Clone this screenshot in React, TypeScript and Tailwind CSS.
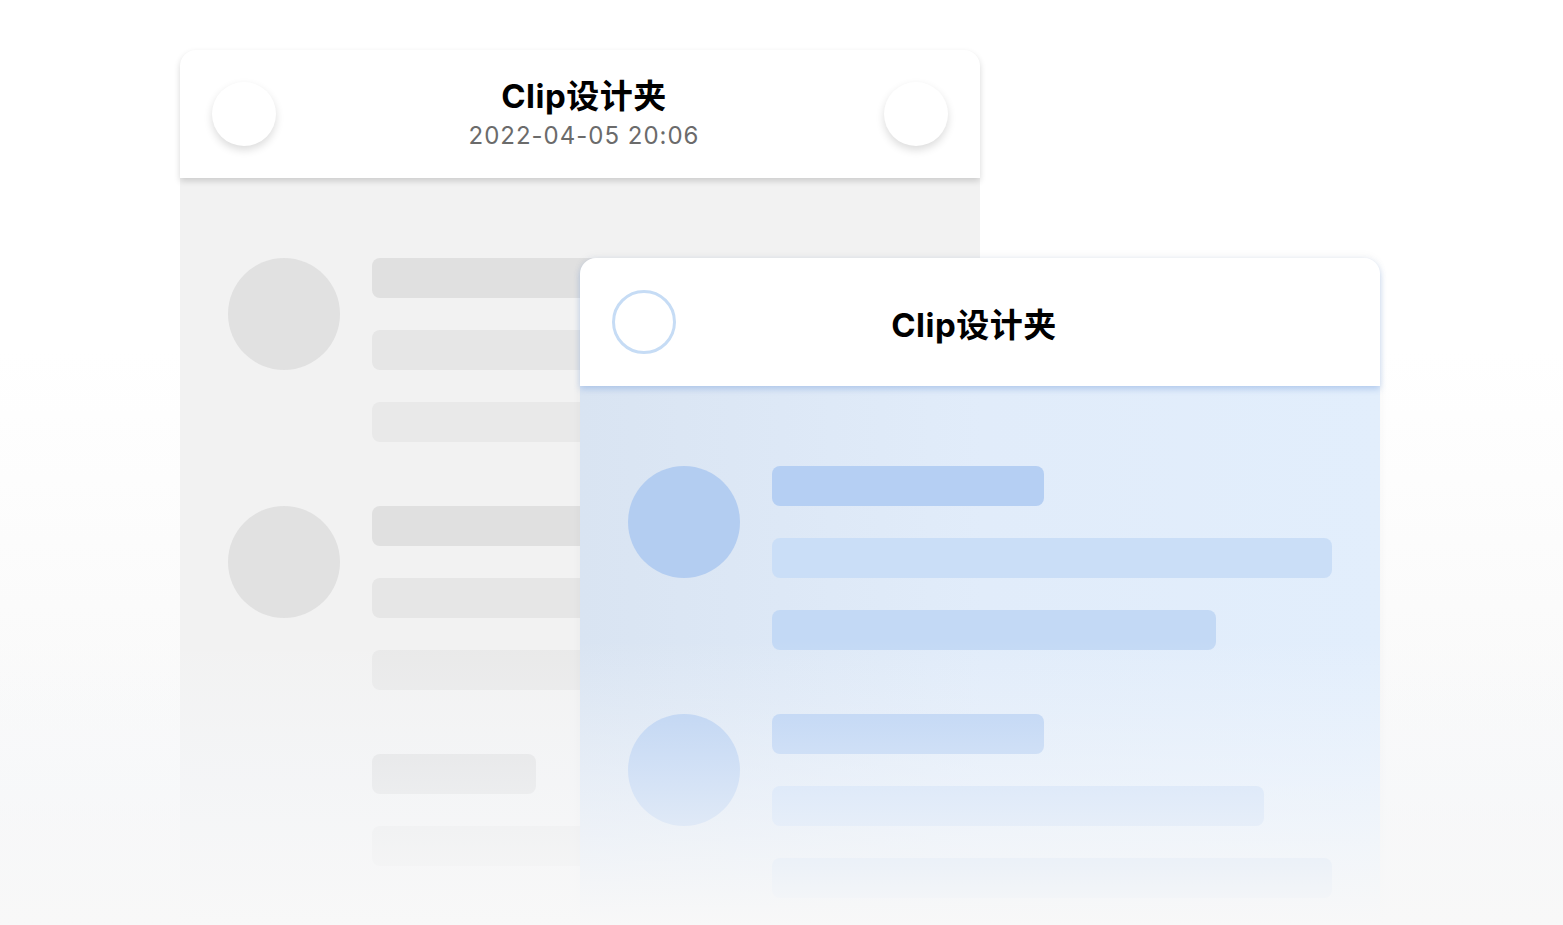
import React from "react"

const font = { fontFamily: '"Inter", "Noto Sans CJK SC", sans-serif' }

type Row = { w: string; c: string }

function Group({ circle, rows }: { circle?: string; rows: Row[] }) {
  return (
    <div className="flex gap-8">
      <div className={`w-28 h-28 shrink-0 rounded-full ${circle ?? ""}`} />
      <div className="flex flex-col gap-8">
        {rows.map((r, i) => (
          <div key={i} className={`h-10 rounded-lg ${r.w} ${r.c}`} />
        ))}
      </div>
    </div>
  )
}

const grey = ["bg-[#e0e0e0]", "bg-[#e6e6e6]", "bg-[#e9e9e9]"]

function BackCard() {
  return (
    <div className="absolute left-[180px] top-[50px] w-[800px] h-[875px] flex flex-col">
      {/* Header */}
      <div className="relative z-10 h-32 bg-white rounded-t-2xl shadow-[0_3px_6px_rgba(0,0,0,0.16)] flex items-center justify-between px-8">
        <div className="w-16 h-16 rounded-full bg-white shadow-[0_4px_8px_rgba(0,0,0,0.14)]" />
        <div className="flex flex-col items-center ml-2">
          <div className="text-[33px] leading-[38px] font-bold tracking-[0.5px] text-black">Clip设计夹</div>
          <div className="mt-1.5 text-[24px] leading-[30px] text-[#6b6b6b] tracking-[1px]">2022-04-05 20:06</div>
        </div>
        <div className="w-16 h-16 rounded-full bg-white shadow-[0_4px_8px_rgba(0,0,0,0.14)]" />
      </div>

      {/* Body */}
      <div className="flex-1 bg-[#f2f2f2] pl-12 pt-20 flex flex-col gap-16">
        <Group circle="bg-[#e1e1e1]" rows={grey.map((c) => ({ w: "w-[560px]", c }))} />
        <Group circle="bg-[#e1e1e1]" rows={grey.map((c) => ({ w: "w-[560px]", c }))} />
        <Group rows={[{ w: "w-[164px]", c: grey[0] }, { w: "w-[560px]", c: grey[1] }]} />
      </div>
    </div>
  )
}

function FrontCard() {
  return (
    <div className="absolute left-[580px] top-[258px] w-[800px] h-[667px] flex flex-col rounded-t-2xl shadow-[0_-2px_10px_rgba(0,0,0,0.04)]">
      {/* Header */}
      <div className="relative z-10 h-32 bg-white rounded-t-2xl shadow-[0_3px_6px_rgba(120,160,220,0.45)] flex items-center px-8">
        <div className="w-16 h-16 shrink-0 rounded-full border-[3px] border-[#c6dcf5] bg-white" />
        <div className="flex-1 text-center pt-1.5 pr-[76px] text-[33px] leading-[38px] font-bold tracking-[0.5px] text-black">Clip设计夹</div>
      </div>

      {/* Body */}
      <div className="flex-1 bg-gradient-to-r from-[#d9e4f2] via-[#e1ecfa] to-[#e2eefc] pl-12 pt-20 flex flex-col gap-16">
        <Group
          circle="bg-[#b3cdf1]"
          rows={[
            { w: "w-[272px]", c: "bg-[#b5cff3]" },
            { w: "w-[560px]", c: "bg-[#cadef7]" },
            { w: "w-[444px]", c: "bg-[#c3d9f5]" },
          ]}
        />
        <Group
          circle="bg-[#b3cdf1]"
          rows={[
            { w: "w-[272px]", c: "bg-[#b5cff3]" },
            { w: "w-[492px]", c: "bg-[#c6dbf7]" },
            { w: "w-[560px]", c: "bg-[#c3d9f5]" },
          ]}
        />
      </div>
    </div>
  )
}

export default function App() {
  return (
    <div
      className="relative w-[1563px] h-[925px] overflow-hidden bg-gradient-to-b from-white from-[38%] to-[#f6f6f6]"
      style={font}
    >
      <BackCard />
      <FrontCard />
      {/* bottom fade */}
      <div className="absolute left-0 right-0 bottom-0 h-[285px] bg-gradient-to-b from-[rgba(246,248,251,0)] via-[rgba(246,248,251,0.5)] to-[#f8f8f8] pointer-events-none" />
    </div>
  )
}
